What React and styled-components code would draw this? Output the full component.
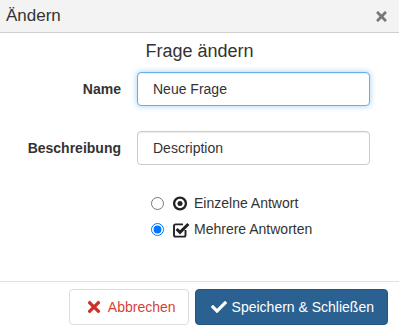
import React from 'react'
import styled, { createGlobalStyle } from 'styled-components'
import { FaTimes, FaCheck } from 'react-icons/fa'

const Global = createGlobalStyle`
  html, body {
    margin: 0;
    padding: 0;
    background: #fff;
    font-family: "Liberation Sans", Arial, sans-serif;
    color: #333;
  }
  * { box-sizing: border-box; }
`

const Dialog = styled.div`
  width: 399px;
  height: 335px;
  display: flex;
  flex-direction: column;
  background: #fff;
`

const Header = styled.div`
  height: 33px;
  display: flex;
  align-items: center;
  justify-content: space-between;
  padding: 0 10px 0 6px;
  background: #f3f3f3;
  border-bottom: 1px solid #cfcfcf;
`

const Title = styled.div`
  font-size: 17px;
  color: #333;
`

const Close = styled.span`
  display: flex;
  font-size: 15px;
  color: #777;
  margin-top: 1px;
`

const Body = styled.div`
  flex: 1;
  padding-top: 8px;
`

const Heading = styled.h4`
  margin: 0 0 11px;
  font-size: 18px;
  font-weight: normal;
  line-height: 20px;
  text-align: center;
  color: #333;
`

const Row = styled.div`
  display: flex;
  align-items: center;
  margin-bottom: ${p => p.$gap || 0}px;
`

const Label = styled.label`
  width: 121px;
  text-align: right;
  font-size: 14px;
  font-weight: bold;
  color: #333;
`

const Input = styled.input`
  width: 233px;
  height: 34px;
  margin-left: 16px;
  padding: 0 15px;
  font-family: inherit;
  font-size: 14px;
  color: #333;
  border: 1px solid ${p => (p.$focus ? '#66afe9' : '#ccc')};
  border-radius: 4px;
  outline: none;
  box-shadow: ${p =>
    p.$focus
      ? 'inset 0 1px 1px rgba(0,0,0,.075), 0 0 6px rgba(102,175,233,.6)'
      : 'inset 0 1px 1px rgba(0,0,0,.075)'};
`

const Options = styled.div`
  margin-top: 25px;
  padding-left: 151px;
  display: flex;
  flex-direction: column;
`

const Option = styled.label`
  display: flex;
  align-items: center;
  height: 26px;
  font-size: 14px;
  color: #333;

  input {
    margin: 0 8px 0 0;
    width: 13px;
    height: 13px;
  }
`

const Icon = styled.svg`
  width: 18px;
  height: 18px;
  margin-right: 4px;
  flex: none;
`

const Footer = styled.div`
  border-top: 1px solid #e1e1e1;
  padding: 7px 11px 10px;
  display: flex;
  justify-content: flex-end;
  gap: 6px;
`

const Button = styled.button`
  height: 36px;
  padding: 0 ${p => (p.$primary ? 13 : 12)}px 0 ${p => (p.$primary ? 15 : 15)}px;
  display: flex;
  align-items: center;
  gap: 5px;
  font-family: inherit;
  font-size: 14px;
  border-radius: 4px;
  border: 1px solid ${p => (p.$primary ? '#245680' : '#ddd')};
  background: ${p => (p.$primary ? '#2b6190' : '#fff')};
  color: ${p => (p.$primary ? '#fff' : '#d43f3a')};

  svg {
    font-size: ${p => (p.$primary ? 16 : 18)}px;
    color: ${p => (p.$primary ? '#fff' : '#d0302c')};
  }
`

const DotCircle = () => (
  <Icon viewBox="0 0 18 18">
    <circle cx="8" cy="9.5" r="5.9" fill="none" stroke="#222" strokeWidth="2.3" />
    <circle cx="8" cy="9.5" r="2.5" fill="#222" />
  </Icon>
)

const CheckSquare = () => (
  <Icon viewBox="0 0 18 18">
    <path d="M13.5 10 V15 a1.6 1.6 0 0 1 -1.6 1.6 H3.6 a1.6 1.6 0 0 1 -1.6 -1.6 V6 a1.6 1.6 0 0 1 1.6 -1.6 H11"
      fill="none" stroke="#222" strokeWidth="1.9" />
    <path d="M4.6 9 L8 12.4 L16.4 4" fill="none" stroke="#222" strokeWidth="3" />
  </Icon>
)

export default function App() {
  return (
    <>
      <Global />
      <Dialog>
        <Header>
          <Title>Ändern</Title>
          <Close><FaTimes /></Close>
        </Header>
        <Body>
          <Heading>Frage ändern</Heading>
          <Row $gap={25}>
            <Label>Name</Label>
            <Input $focus defaultValue="Neue Frage" />
          </Row>
          <Row>
            <Label>Beschreibung</Label>
            <Input defaultValue="Description" />
          </Row>
          <Options>
            <Option>
              <input type="radio" name="mode" />
              <DotCircle />
              Einzelne Antwort
            </Option>
            <Option>
              <input type="radio" name="mode" defaultChecked />
              <CheckSquare />
              Mehrere Antworten
            </Option>
          </Options>
        </Body>
        <Footer>
          <Button>
            <FaTimes />
            Abbrechen
          </Button>
          <Button $primary>
            <FaCheck />
            Speichern &amp; Schließen
          </Button>
        </Footer>
      </Dialog>
    </>
  )
}
